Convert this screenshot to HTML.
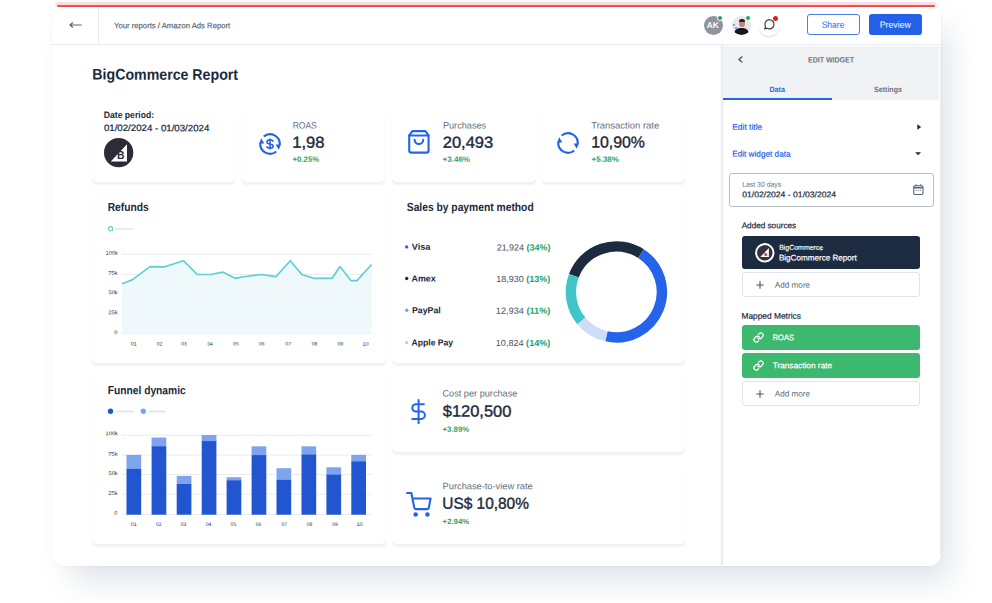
<!DOCTYPE html>
<html><head><meta charset="utf-8"><title>BigCommerce Report</title>
<style>
*{box-sizing:border-box;margin:0;padding:0}
html,body{width:992px;height:603px;overflow:hidden;background:#fff;font-family:"Liberation Sans",sans-serif;color:#1b2a3d}
.a{position:absolute}
.t{position:absolute;left:0;top:0;white-space:nowrap;line-height:1;transform-origin:0 50%}
.card{position:absolute;background:#fff;border-radius:5px;box-shadow:0 3px 2px -.5px rgba(60,75,100,.07),0 0 1px rgba(60,75,100,.03)}
svg{position:absolute;overflow:visible}
</style></head><body>
<div class="a" style="left:52px;top:4px;width:889px;height:561.5px;background:#fff;border-radius:12px;box-shadow:14px 20px 32px -7px rgba(70,90,120,.19),0 0 2px rgba(70,90,120,.09)"></div>
<div class="a" style="left:55px;top:2px;width:882px;height:4px;background:#fcdcdf;border-radius:4px 4px 0 0"></div>
<div class="a" style="left:57px;top:5px;width:878px;height:2px;background:#f04d4d;border-radius:2px"></div>
<div class="a" style="left:52px;top:44px;width:889px;height:1px;background:#e8ebef"></div>
<div class="a" style="left:98px;top:8px;width:1px;height:36px;background:#e8ebef"></div>
<svg style="left:68px;top:20px" width="16" height="10" viewBox="0 0 16 10"><path d="M2 5H13.2M2 5L4.600 2.800M2 5L4.600 7.200" stroke="#5b6675" stroke-width="1.200" fill="none" stroke-linecap="round"/></svg>
<div class="a" style="left:703.5px;top:15.8px;width:19px;height:18.8px;border-radius:50%;background:#8e959e"></div>
<div class="a" style="left:716.9px;top:15.2px;width:6.2px;height:6.2px;border-radius:50%;background:#1fa463;border:.4px solid #fff"></div>
<div class="a" style="left:731.6px;top:15.8px;width:19.4px;height:18.8px;border-radius:50%;background:#e6eaef;overflow:hidden"><div class="a" style="left:1px;top:8px;width:2px;height:2px;border-radius:50%;background:#5b8def"></div><div class="a" style="left:3px;top:11px;width:2px;height:2.500px;border-radius:50%;background:#5b8def"></div><div class="a" style="left:7.200px;top:4px;width:6px;height:7.500px;border-radius:45%;background:#b98d74"></div><div class="a" style="left:7px;top:3.200px;width:6.400px;height:3px;border-radius:3px 3px 1px 1px;background:#2c2420"></div><div class="a" style="left:2.700px;top:12.200px;width:14.500px;height:9px;border-radius:6px 6px 0 0;background:#17171b"></div></div>
<div class="a" style="left:744.8px;top:15.2px;width:6.2px;height:6.2px;border-radius:50%;background:#1fa463;border:.4px solid #fff"></div>
<div class="a" style="left:759.4px;top:16px;width:19.6px;height:19.6px;border-radius:50%;background:#fff;box-shadow:0 1.5px 2px rgba(40,55,80,.14)"></div>
<svg style="left:762.7px;top:18.3px" width="13" height="13" viewBox="0 0 13 13"><path d="M6.500 1.700a4.600 4.600 0 1 1-2.500 8.500L1.700 10.900l.8-2.200A4.600 4.600 0 0 1 6.500 1.700z" fill="none" stroke="#2a3646" stroke-width="1.150" stroke-linejoin="round"/></svg>
<div class="a" style="left:773.3px;top:15.6px;width:5.2px;height:5.2px;border-radius:50%;background:#e01e2d"></div>
<div class="a" style="left:806.5px;top:13.5px;width:53px;height:21.5px;border:1px solid #4a7ced;border-radius:3px;background:#fff"></div>
<div class="a" style="left:869px;top:13.5px;width:53px;height:21.5px;border-radius:3px;background:#2361e8"></div>
<div class="card" style="left:92px;top:108px;width:143.3px;height:73.7px"></div>
<div class="card" style="left:242px;top:108px;width:143.3px;height:73.7px"></div>
<div class="card" style="left:392.3px;top:108px;width:143.3px;height:73.7px"></div>
<div class="card" style="left:541.7px;top:108px;width:143.3px;height:73.7px"></div>
<div class="card" style="left:92px;top:189.5px;width:293.5px;height:173.4px"></div>
<div class="card" style="left:392.3px;top:189.5px;width:292.7px;height:173.4px"></div>
<div class="card" style="left:92px;top:369.5px;width:293.5px;height:174.3px"></div>
<div class="card" style="left:392.3px;top:369.5px;width:292.7px;height:82.3px"></div>
<div class="card" style="left:392.3px;top:459.5px;width:292.7px;height:84.3px"></div>
<svg style="left:103.9px;top:138.2px" width="29.3" height="29.3" viewBox="0 0 29.3 29.3"><circle cx="14.65" cy="14.65" r="14.65" fill="#2e2b38"/><path d="M6.8 23.4L23 6.3V23.4Z" fill="#fff"/><text x="13.1" y="20.7" font-family="Liberation Sans" font-weight="bold" font-size="10.4" fill="#2e2b38">B</text></svg>
<svg style="left:257.85px;top:131.75px" width="24" height="24" viewBox="-12 -12 24 24"><path d="M-6.27 -7.47A9.75 9.75 0 0 1 9.70 1.02" stroke="#2563eb" stroke-width="2.2" fill="none"/><path d="M10.89 0.38L5.67 0.60L8.70 5.87Z" fill="#2563eb"/><path d="M6.27 7.47A9.75 9.75 0 0 1 -9.70 -1.02" stroke="#2563eb" stroke-width="2.2" fill="none"/><path d="M-10.89 -0.38L-5.67 -0.60L-8.70 -5.87Z" fill="#2563eb"/><path transform="scale(1.06)" d="M0 -5.3V5.3M2.900 -2.200C2.900 -3.400 1.600 -3.900 0 -3.900C-1.600 -3.900 -2.900 -3.300 -2.900 -2C-2.900 -0.700 -1.500 -0.300 0 0C1.500 0.300 3 0.800 3 2.100C3 3.400 1.600 3.900 0 3.900C-1.600 3.900 -3 3.400 -3 2.200" fill="none" stroke="#2563eb" stroke-width="1.45"/></svg>
<svg style="left:555.8px;top:130.65px" width="24" height="24" viewBox="-12 -12 24 24"><path d="M-6.27 -7.47A9.75 9.75 0 0 1 9.70 1.02" stroke="#2563eb" stroke-width="2.2" fill="none"/><path d="M10.89 0.38L5.67 0.60L8.70 5.87Z" fill="#2563eb"/><path d="M6.27 7.47A9.75 9.75 0 0 1 -9.70 -1.02" stroke="#2563eb" stroke-width="2.2" fill="none"/><path d="M-10.89 -0.38L-5.67 -0.60L-8.70 -5.87Z" fill="#2563eb"/></svg>
<svg style="left:405.95px;top:129.35px" width="25.8" height="25.8" viewBox="0 0 24 24" fill="none" stroke="#2563eb" stroke-width="1.95" stroke-linecap="round" stroke-linejoin="round"><path d="M6 2L3 6v14a2 2 0 0 0 2 2h14a2 2 0 0 0 2-2V6l-3-4z"/><path d="M3 6h18"/><path d="M16 10a4 4 0 0 1-8 0"/></svg>
<svg style="left:406.4px;top:399.25px" width="25.2" height="25.2" viewBox="0 0 24 24" fill="none" stroke="#2563eb" stroke-width="1.9" stroke-linecap="round" stroke-linejoin="round"><path d="M12 1v22"/><path d="M17 5H9.5a3.5 3.5 0 0 0 0 7h5a3.5 3.5 0 0 1 0 7H6"/></svg>
<svg style="left:406px;top:491.7px" width="25.7" height="25.7" viewBox="0 0 24 24" fill="none" stroke="#2563eb" stroke-width="1.95" stroke-linecap="round" stroke-linejoin="round"><circle cx="9" cy="21" r="1.15" fill="#2563eb"/><circle cx="20" cy="21" r="1.15" fill="#2563eb"/><path d="M1 1h4l2.680 13.390a2 2 0 0 0 2 1.610h9.720a2 2 0 0 0 2-1.610L23 6H6"/></svg>
<svg style="left:0;top:0" width="992" height="603"><rect x="122" y="253.7" width="249.6" height="1" fill="#e9ecef"/><rect x="122" y="274.0" width="249.6" height="1" fill="#e9ecef"/><rect x="122" y="293.4" width="249.6" height="1" fill="#e9ecef"/><rect x="122" y="313.3" width="249.6" height="1" fill="#e9ecef"/><rect x="122" y="333.1" width="249.6" height="1" fill="#e9ecef"/><path d="M122 283.7L132.2 279.9L150 266.6L164.7 266.8L183.4 260.7L197.2 274.5L210.4 274.5L223.2 272.2L235 278.3L245.3 276.5L261.1 274.5L275.8 276.7L290.3 260.7L301.8 274.5L313.8 278.3L332.1 278.3L340 266.6L350.8 280.6L356.9 280.6L371.6 264.5L371.6 333.6L122 333.6Z" fill="#ebf8fa" fill-opacity="0.8"/><path d="M122 283.7L132.2 279.9L150 266.6L164.7 266.8L183.4 260.7L197.2 274.5L210.4 274.5L223.2 272.2L235 278.3L245.3 276.5L261.1 274.5L275.8 276.7L290.3 260.7L301.8 274.5L313.8 278.3L332.1 278.3L340 266.6L350.8 280.6L356.9 280.6L371.6 264.5" fill="none" stroke="#5fced7" stroke-width="1.7" stroke-linejoin="round"/><circle cx="110.6" cy="228.7" r="2.1" fill="#fff" stroke="#5fced7" stroke-width="1.1"/><rect x="115.2" y="228" width="18.6" height="1.8" rx=".9" fill="#e4e7eb"/><rect x="122" y="434.7" width="249" height="1" fill="#e9ecef"/><rect x="122" y="454.6" width="249" height="1" fill="#e9ecef"/><rect x="122" y="474.0" width="249" height="1" fill="#e9ecef"/><rect x="122" y="493.7" width="249" height="1" fill="#e9ecef"/><rect x="122" y="514.0" width="249" height="1" fill="#e9ecef"/><rect x="126.5" y="454.9" width="14.7" height="14.5" fill="#7fa4ee"/><rect x="126.5" y="468.9" width="14.7" height="45.8" fill="#2156d0"/><rect x="151.6" y="437.5" width="14.7" height="9.3" fill="#7fa4ee"/><rect x="151.6" y="446.3" width="14.7" height="68.4" fill="#2156d0"/><rect x="176.7" y="475.9" width="14.7" height="8.6" fill="#7fa4ee"/><rect x="176.7" y="484" width="14.7" height="30.7" fill="#2156d0"/><rect x="201.7" y="435" width="14.7" height="6.6" fill="#7fa4ee"/><rect x="201.7" y="441.1" width="14.7" height="73.6" fill="#2156d0"/><rect x="226.6" y="477.2" width="14.7" height="3.7" fill="#7fa4ee"/><rect x="226.6" y="480.4" width="14.7" height="34.3" fill="#2156d0"/><rect x="251.6" y="446.3" width="14.7" height="9.3" fill="#7fa4ee"/><rect x="251.6" y="455.1" width="14.7" height="59.6" fill="#2156d0"/><rect x="276.5" y="468.2" width="14.7" height="12.2" fill="#7fa4ee"/><rect x="276.5" y="479.9" width="14.7" height="34.8" fill="#2156d0"/><rect x="301.5" y="446.3" width="14.7" height="8.8" fill="#7fa4ee"/><rect x="301.5" y="454.6" width="14.7" height="60.1" fill="#2156d0"/><rect x="326.4" y="467.3" width="14.7" height="7.9" fill="#7fa4ee"/><rect x="326.4" y="474.7" width="14.7" height="40.0" fill="#2156d0"/><rect x="351.3" y="454.9" width="14.7" height="7.0" fill="#7fa4ee"/><rect x="351.3" y="461.4" width="14.7" height="53.3" fill="#2156d0"/><circle cx="110.5" cy="411.3" r="2.7" fill="#2156d0"/><rect x="115.5" y="410.6" width="18" height="1.8" rx=".9" fill="#e4e7eb"/><circle cx="143.3" cy="411.3" r="2.7" fill="#7fa4ee"/><rect x="148.3" y="410.6" width="17.6" height="1.8" rx=".9" fill="#e4e7eb"/><path d="M573.87 275.74A45.5 45.5 0 0 1 640.98 253.61" fill="none" stroke="#1c2b3e" stroke-width="10.4"/><path d="M640.98 253.61A45.5 45.5 0 0 1 606.47 336.30" fill="none" stroke="#2563eb" stroke-width="10.4"/><path d="M606.47 336.30A45.5 45.5 0 0 1 581.29 320.84" fill="none" stroke="#cfdcf9" stroke-width="10.4"/><path d="M581.29 320.84A45.5 45.5 0 0 1 573.87 275.74" fill="none" stroke="#41c6c8" stroke-width="10.4"/><circle cx="406.7" cy="246.9" r="1.7" fill="#2563eb"/><circle cx="406.7" cy="278.5" r="1.7" fill="#1c2b3e"/><circle cx="406.7" cy="310.3" r="1.7" fill="#41c6c8"/><circle cx="406.7" cy="342.6" r="1.7" fill="#b9cbf6"/></svg>
<div class="a" style="left:718.5px;top:45px;width:4px;height:520px;background:linear-gradient(90deg,rgba(225,229,234,0),rgba(225,229,234,.45) 60%,rgba(222,226,232,.95))"></div>
<div class="a" style="left:722.5px;top:45.6px;width:216.6px;height:54.3px;background:#f1f2f4"></div>
<div class="a" style="left:939.5px;top:45px;width:1.5px;height:510px;background:#eceef1"></div>
<div class="a" style="left:722.5px;top:97.7px;width:109px;height:2.2px;background:#2563eb"></div>
<svg style="left:737px;top:55px" width="8" height="10" viewBox="0 0 8 10"><path d="M5.300 1.600L2 4.600L5.300 7.600" fill="none" stroke="#4b5563" stroke-width="1.3"/></svg>
<svg style="left:916.500px;top:123.800px" width="5" height="7" viewBox="0 0 5 7"><path d="M0.300 0.200L4.200 3L0.300 5.800Z" fill="#1b2a3d"/></svg>
<svg style="left:915.400px;top:151.800px" width="7" height="5" viewBox="0 0 7 5"><path d="M0.200 0.200H6L3.100 3.300Z" fill="#1b2a3d"/></svg>
<div class="a" style="left:729px;top:173.400px;width:205px;height:33.500px;border:1px solid #b9bfc7;border-radius:3px;background:#fff"></div>
<svg style="left:913px;top:184px" width="11" height="11.500" viewBox="0 0 11 11.500"><rect x="0.700" y="1.700" width="9.300" height="8.800" rx="1.200" fill="none" stroke="#5b6675" stroke-width="1.100"/><path d="M0.700 3.700H10" stroke="#5b6675" stroke-width="1.600"/><path d="M3 0.300V2M7.700 0.300V2" stroke="#5b6675" stroke-width="1.100"/><path d="M2.500 6.300H8.200" stroke="#5b6675" stroke-width="0.900" stroke-dasharray="1.200 1"/></svg>
<div class="a" style="left:742px;top:235.700px;width:178px;height:33.400px;border-radius:3px;background:#1c2b3f"></div>
<svg style="left:754.9px;top:243px" width="19.6" height="19.6" viewBox="0 0 19.6 19.6"><circle cx="9.8" cy="9.8" r="8.7" fill="#37303d" stroke="#fff" stroke-width="2"/><path d="M5.400 13.900L13.900 5.100V13.900Z" fill="#fff"/><text x="9.200" y="12.600" font-family="Liberation Sans" font-weight="bold" font-size="4.300" fill="#37303d">B</text></svg>
<div class="a" style="left:742px;top:272.2px;width:178px;height:24.4px;border:1px solid #e1e4e8;border-radius:3px;background:#fff"></div>
<svg style="left:756.200px;top:280.59999999999997px" width="8" height="8" viewBox="0 0 8 8"><path d="M4 0.300V7.700M0.300 4H7.700" stroke="#4b5563" stroke-width="1.100"/></svg>
<div class="a" style="left:742px;top:381.3px;width:178px;height:24.4px;border:1px solid #e1e4e8;border-radius:3px;background:#fff"></div>
<svg style="left:756.200px;top:389.7px" width="8" height="8" viewBox="0 0 8 8"><path d="M4 0.300V7.700M0.300 4H7.700" stroke="#4b5563" stroke-width="1.100"/></svg>
<div class="a" style="left:742px;top:325px;width:178px;height:24.500px;border-radius:3px;background:#3cb96f"></div>
<svg style="left:753.43px;top:332.15px" width="11.04" height="11.04" viewBox="0 0 24 24" fill="none" stroke="#fff" stroke-width="2.7" stroke-linecap="round" stroke-linejoin="round"><path d="M10 13a5 5 0 0 0 7.540.540l3-3a5 5 0 0 0-7.070-7.070l-1.720 1.710"/><path d="M14 11a5 5 0 0 0-7.540-.540l-3 3a5 5 0 0 0 7.070 7.070l1.710-1.710"/></svg>
<div class="a" style="left:742px;top:353.2px;width:178px;height:24.500px;border-radius:3px;background:#3cb96f"></div>
<svg style="left:753.43px;top:360.34999999999997px" width="11.04" height="11.04" viewBox="0 0 24 24" fill="none" stroke="#fff" stroke-width="2.7" stroke-linecap="round" stroke-linejoin="round"><path d="M10 13a5 5 0 0 0 7.540.540l3-3a5 5 0 0 0-7.070-7.070l-1.720 1.710"/><path d="M14 11a5 5 0 0 0-7.540-.540l-3 3a5 5 0 0 0 7.070 7.070l1.710-1.710"/></svg>
<div class="t" style="font-size:8px;font-weight:normal;-webkit-text-stroke:0.19px;color:#5d6877;transform:translate(114.03px,22.20px) scaleX(0.9631) rotate(.05deg)">Your reports / Amazon Ads Report</div>
<div class="t" style="font-size:8.4px;font-weight:bold;color:#fff;transform:translate(706.77px,20.95px) scaleX(0.9966) rotate(.05deg)">AK</div>
<div class="t" style="font-size:9px;font-weight:normal;color:#2563eb;transform:translate(821.68px,20.83px) scaleX(0.9480) rotate(.05deg)">Share</div>
<div class="t" style="font-size:9px;font-weight:normal;color:#fff;transform:translate(879.67px,20.85px) scaleX(0.9736) rotate(.05deg)">Preview</div>
<div class="t" style="font-size:15.3px;font-weight:bold;color:#1b2a3d;transform:translate(92.32px,66.60px) scaleX(0.9267) rotate(.05deg)">BigCommerce Report</div>
<div class="t" style="font-size:9.3px;font-weight:bold;color:#1b2a3d;transform:translate(103.77px,110.98px) scaleX(0.9267) rotate(.05deg)">Date period:</div>
<div class="t" style="font-size:9.3px;font-weight:normal;-webkit-text-stroke:0.22px;color:#1b2a3d;transform:translate(103.92px,124.09px) scaleX(1.0396) rotate(.05deg)">01/02/2024 - 01/03/2024</div>
<div class="t" style="font-size:9.3px;font-weight:normal;color:#646e7b;transform:translate(292.63px,121.44px) scaleX(0.9159) rotate(.05deg)">ROAS</div>
<div class="t" style="font-size:16px;font-weight:normal;-webkit-text-stroke:0.38px;color:#1b2a3d;transform:translate(292.20px,134.63px) scaleX(1.0377) rotate(.05deg)">1,98</div>
<div class="t" style="font-size:7.6px;font-weight:bold;color:#1fa266;transform:translate(292.59px,155.75px) scaleX(1.0204) rotate(.05deg)">+0.25%</div>
<div class="t" style="font-size:9.3px;font-weight:normal;color:#646e7b;transform:translate(442.92px,121.43px) scaleX(0.9848) rotate(.05deg)">Purchases</div>
<div class="t" style="font-size:16px;font-weight:normal;-webkit-text-stroke:0.38px;color:#1b2a3d;transform:translate(442.73px,134.67px) scaleX(1.0309) rotate(.05deg)">20,493</div>
<div class="t" style="font-size:7.6px;font-weight:bold;color:#1fa266;transform:translate(442.59px,155.77px) scaleX(1.0535) rotate(.05deg)">+3.46%</div>
<div class="t" style="font-size:9.3px;font-weight:normal;color:#646e7b;transform:translate(591.23px,121.43px) scaleX(1.0173) rotate(.05deg)">Transaction rate</div>
<div class="t" style="font-size:16px;font-weight:normal;-webkit-text-stroke:0.38px;color:#1b2a3d;transform:translate(591.18px,134.56px) scaleX(0.9901) rotate(.05deg)">10,90%</div>
<div class="t" style="font-size:7.6px;font-weight:bold;color:#1fa266;transform:translate(591.60px,155.76px) scaleX(1.0514) rotate(.05deg)">+5.38%</div>
<div class="t" style="font-size:11.7px;font-weight:bold;color:#1b2a3d;transform:translate(107.70px,200.98px) scaleX(0.8787) rotate(.05deg)">Refunds</div>
<div class="t" style="font-size:11.7px;font-weight:bold;color:#1b2a3d;transform:translate(406.77px,200.98px) scaleX(0.8801) rotate(.05deg)">Sales by payment method</div>
<div class="t" style="font-size:8.9px;font-weight:bold;color:#1b2a3d;transform:translate(411.68px,242.80px) scaleX(1.0328) rotate(.05deg)">Visa</div>
<div class="t" style="font-size:8.9px;font-weight:bold;color:#1b2a3d;transform:translate(411.49px,274.43px) scaleX(1.0015) rotate(.05deg)">Amex</div>
<div class="t" style="font-size:8.9px;font-weight:bold;color:#1b2a3d;transform:translate(411.95px,306.24px) scaleX(0.9907) rotate(.05deg)">PayPal</div>
<div class="t" style="font-size:8.9px;font-weight:bold;color:#1b2a3d;transform:translate(411.55px,338.52px) scaleX(0.9679) rotate(.05deg)">Apple Pay</div>
<div class="t" style="font-size:8.9px;font-weight:normal;color:#4a5462;transform:translate(496.67px,243.46px) scaleX(1.0075) rotate(.05deg)">21,924 <b style="color:#1fa266">(34%)</b></div>
<div class="t" style="font-size:8.9px;font-weight:normal;color:#4a5462;transform:translate(496.32px,274.94px) scaleX(1.0135) rotate(.05deg)">18,930 <b style="color:#1fa266">(13%)</b></div>
<div class="t" style="font-size:8.9px;font-weight:normal;color:#4a5462;transform:translate(495.79px,306.73px) scaleX(1.0346) rotate(.05deg)">12,934 <b style="color:#1fa266">(11%)</b></div>
<div class="t" style="font-size:8.9px;font-weight:normal;color:#4a5462;transform:translate(495.81px,339.05px) scaleX(1.0230) rotate(.05deg)">10,824 <b style="color:#1fa266">(14%)</b></div>
<div class="t" style="font-size:5.4px;font-weight:normal;color:#253244;transform:translate(105.58px,250.81px) scaleX(1.0572) rotate(.05deg)">100k</div>
<div class="t" style="font-size:5.4px;font-weight:normal;color:#253244;transform:translate(107.90px,270.83px) scaleX(1.1210) rotate(.05deg)">75k</div>
<div class="t" style="font-size:5.4px;font-weight:normal;color:#253244;transform:translate(108.44px,290.23px) scaleX(1.0699) rotate(.05deg)">50k</div>
<div class="t" style="font-size:5.4px;font-weight:normal;color:#253244;transform:translate(108.26px,310.35px) scaleX(1.0885) rotate(.05deg)">25k</div>
<div class="t" style="font-size:5.4px;font-weight:normal;color:#253244;transform:translate(114.29px,330.21px) scaleX(1.0179) rotate(.05deg)">0</div>
<div class="t" style="font-size:5.4px;font-weight:normal;color:#253244;transform:translate(105.51px,431.34px) scaleX(1.0632) rotate(.05deg)">100k</div>
<div class="t" style="font-size:5.4px;font-weight:normal;color:#253244;transform:translate(107.96px,451.69px) scaleX(1.1282) rotate(.05deg)">75k</div>
<div class="t" style="font-size:5.4px;font-weight:normal;color:#253244;transform:translate(108.43px,470.95px) scaleX(1.0713) rotate(.05deg)">50k</div>
<div class="t" style="font-size:5.4px;font-weight:normal;color:#253244;transform:translate(108.23px,490.87px) scaleX(1.0904) rotate(.05deg)">25k</div>
<div class="t" style="font-size:5.4px;font-weight:normal;color:#253244;transform:translate(114.28px,510.82px) scaleX(1.0095) rotate(.05deg)">0</div>
<div class="t" style="font-size:5.2px;font-weight:normal;color:#253244;transform:translate(130.65px,341.61px) scaleX(1.0464) rotate(.05deg)">01</div>
<div class="t" style="font-size:5.2px;font-weight:normal;color:#253244;transform:translate(156.69px,341.61px) scaleX(0.9799) rotate(.05deg)">02</div>
<div class="t" style="font-size:5.2px;font-weight:normal;color:#253244;transform:translate(181.30px,341.61px) scaleX(0.9348) rotate(.05deg)">03</div>
<div class="t" style="font-size:5.2px;font-weight:normal;color:#253244;transform:translate(207.39px,341.77px) scaleX(0.9156) rotate(.05deg)">04</div>
<div class="t" style="font-size:5.2px;font-weight:normal;color:#253244;transform:translate(233.12px,341.61px) scaleX(0.9916) rotate(.05deg)">05</div>
<div class="t" style="font-size:5.2px;font-weight:normal;color:#253244;transform:translate(258.96px,341.61px) scaleX(0.9432) rotate(.05deg)">06</div>
<div class="t" style="font-size:5.2px;font-weight:normal;color:#253244;transform:translate(285.62px,341.61px) scaleX(0.9613) rotate(.05deg)">07</div>
<div class="t" style="font-size:5.2px;font-weight:normal;color:#253244;transform:translate(311.70px,341.61px) scaleX(0.9659) rotate(.05deg)">08</div>
<div class="t" style="font-size:5.2px;font-weight:normal;color:#253244;transform:translate(337.39px,341.61px) scaleX(0.9713) rotate(.05deg)">09</div>
<div class="t" style="font-size:5.2px;font-weight:normal;color:#253244;transform:translate(362.48px,341.77px) scaleX(1.0601) rotate(.05deg)">10</div>
<div class="t" style="font-size:5.2px;font-weight:normal;color:#253244;transform:translate(130.64px,522.11px) scaleX(1.0479) rotate(.05deg)">01</div>
<div class="t" style="font-size:5.2px;font-weight:normal;color:#253244;transform:translate(156.01px,522.09px) scaleX(0.9303) rotate(.05deg)">02</div>
<div class="t" style="font-size:5.2px;font-weight:normal;color:#253244;transform:translate(180.81px,522.11px) scaleX(0.9485) rotate(.05deg)">03</div>
<div class="t" style="font-size:5.2px;font-weight:normal;color:#253244;transform:translate(205.70px,522.10px) scaleX(1.0078) rotate(.05deg)">04</div>
<div class="t" style="font-size:5.2px;font-weight:normal;color:#253244;transform:translate(230.59px,522.10px) scaleX(0.9694) rotate(.05deg)">05</div>
<div class="t" style="font-size:5.2px;font-weight:normal;color:#253244;transform:translate(255.85px,522.10px) scaleX(0.9427) rotate(.05deg)">06</div>
<div class="t" style="font-size:5.2px;font-weight:normal;color:#253244;transform:translate(281.48px,522.09px) scaleX(0.9738) rotate(.05deg)">07</div>
<div class="t" style="font-size:5.2px;font-weight:normal;color:#253244;transform:translate(306.80px,522.11px) scaleX(0.9473) rotate(.05deg)">08</div>
<div class="t" style="font-size:5.2px;font-weight:normal;color:#253244;transform:translate(332.17px,522.11px) scaleX(0.9417) rotate(.05deg)">09</div>
<div class="t" style="font-size:5.2px;font-weight:normal;color:#253244;transform:translate(356.54px,522.10px) scaleX(1.0620) rotate(.05deg)">10</div>
<div class="t" style="font-size:11.7px;font-weight:bold;color:#1b2a3d;transform:translate(107.71px,384.12px) scaleX(0.8770) rotate(.05deg)">Funnel dynamic</div>
<div class="t" style="font-size:9.3px;font-weight:normal;color:#646e7b;transform:translate(442.48px,389.43px) scaleX(0.9860) rotate(.05deg)">Cost per purchase</div>
<div class="t" style="font-size:16px;font-weight:normal;-webkit-text-stroke:0.38px;color:#1b2a3d;transform:translate(442.77px,403.59px) scaleX(1.0283) rotate(.05deg)">$120,500</div>
<div class="t" style="font-size:7.6px;font-weight:bold;color:#1fa266;transform:translate(442.59px,425.68px) scaleX(1.0206) rotate(.05deg)">+3.89%</div>
<div class="t" style="font-size:9.3px;font-weight:normal;color:#646e7b;transform:translate(442.60px,482.13px) scaleX(0.9960) rotate(.05deg)">Purchase-to-view rate</div>
<div class="t" style="font-size:16px;font-weight:normal;-webkit-text-stroke:0.38px;color:#1b2a3d;transform:translate(442.29px,495.79px) scaleX(0.9643) rotate(.05deg)">US$ 10,80%</div>
<div class="t" style="font-size:7.6px;font-weight:bold;color:#1fa266;transform:translate(442.62px,517.98px) scaleX(1.0203) rotate(.05deg)">+2.94%</div>
<div class="t" style="font-size:7.8px;font-weight:bold;color:#6b7480;transform:translate(808.11px,56.48px) scaleX(0.8980) rotate(.05deg)">EDIT WIDGET</div>
<div class="t" style="font-size:7.8px;font-weight:bold;color:#2563eb;transform:translate(769.40px,86.00px) scaleX(0.9239) rotate(.05deg)">Data</div>
<div class="t" style="font-size:7.8px;font-weight:bold;color:#6b7480;transform:translate(874.00px,85.99px) scaleX(0.9084) rotate(.05deg)">Settings</div>
<div class="t" style="font-size:8.2px;font-weight:normal;-webkit-text-stroke:0.20px;color:#2563eb;transform:translate(732.17px,123.83px) scaleX(1.0321) rotate(.05deg)">Edit title</div>
<div class="t" style="font-size:8.2px;font-weight:normal;-webkit-text-stroke:0.20px;color:#2563eb;transform:translate(732.20px,150.62px) scaleX(1.0018) rotate(.05deg)">Edit widget data</div>
<div class="t" style="font-size:7px;font-weight:normal;color:#646e7b;transform:translate(742.15px,180.69px) scaleX(0.9853) rotate(.05deg)">Last 30 days</div>
<div class="t" style="font-size:8.2px;font-weight:normal;-webkit-text-stroke:0.20px;color:#1b2a3d;transform:translate(742.27px,191.28px) scaleX(1.0523) rotate(.05deg)">01/02/2024 - 01/03/2024</div>
<div class="t" style="font-size:8.3px;font-weight:normal;-webkit-text-stroke:0.20px;color:#1b2a3d;transform:translate(741.65px,221.32px) scaleX(0.9845) rotate(.05deg)">Added sources</div>
<div class="t" style="font-size:7px;font-weight:normal;-webkit-text-stroke:0.17px;color:#fff;transform:translate(779.17px,243.84px) scaleX(0.9932) rotate(.05deg)">BigCommerce</div>
<div class="t" style="font-size:8.2px;font-weight:normal;-webkit-text-stroke:0.20px;color:#fff;transform:translate(778.91px,254.47px) scaleX(0.9889) rotate(.05deg)">BigCommerce Report</div>
<div class="t" style="font-size:8.2px;font-weight:normal;color:#5d6877;transform:translate(774.84px,281.70px) scaleX(0.9937) rotate(.05deg)">Add more</div>
<div class="t" style="font-size:8.3px;font-weight:normal;-webkit-text-stroke:0.20px;color:#1b2a3d;transform:translate(741.44px,311.71px) scaleX(1.0083) rotate(.05deg)">Mapped Metrics</div>
<div class="t" style="font-size:8.2px;font-weight:normal;-webkit-text-stroke:0.20px;color:#fff;transform:translate(772.64px,334.24px) scaleX(0.9252) rotate(.05deg)">ROAS</div>
<div class="t" style="font-size:8.2px;font-weight:normal;-webkit-text-stroke:0.20px;color:#fff;transform:translate(772.67px,362.22px) scaleX(1.0102) rotate(.05deg)">Transaction rate</div>
<div class="t" style="font-size:8.2px;font-weight:normal;color:#5d6877;transform:translate(774.84px,390.45px) scaleX(0.9932) rotate(.05deg)">Add more</div>
</body></html>
